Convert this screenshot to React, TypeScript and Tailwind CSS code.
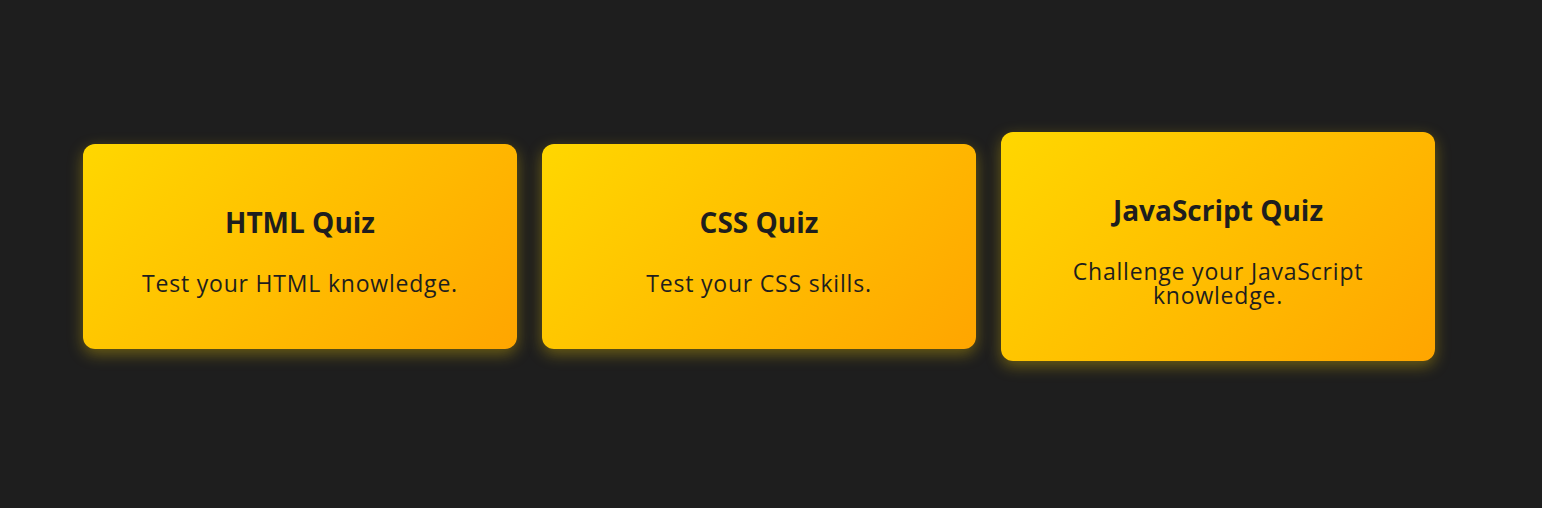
const quizzes = [
  { title: "HTML Quiz", text: "Test your HTML knowledge." },
  { title: "CSS Quiz", text: "Test your CSS skills." },
  { title: "JavaScript Quiz", text: "Challenge your JavaScript knowledge." },
]

const QuizCard = ({ title, text }: { title: string; text: string }) => {
  return (
    <div className="w-[434px] shrink-0 rounded-xl bg-[linear-gradient(135deg,#ffd700,#ffa500)] px-5 pt-[61px] pb-[54px] text-center text-[#1e1e1e] shadow-[0_5px_15px_rgba(255,215,0,0.35)]">
      <h2 className="mb-[32px] text-[28px] leading-[34px] font-bold">{title}</h2>
      <p className="text-[23px] leading-[24px] tracking-[0.8px]">{text}</p>
    </div>
  )
}

export default function App() {
  return (
    <div className="flex h-[508px] w-full items-center gap-[25px] bg-[#1e1e1e] pb-[15px] pl-[83px] font-['Open_Sans',sans-serif]">
      {quizzes.map((q) => (
        <QuizCard key={q.title} title={q.title} text={q.text} />
      ))}
    </div>
  )
}
